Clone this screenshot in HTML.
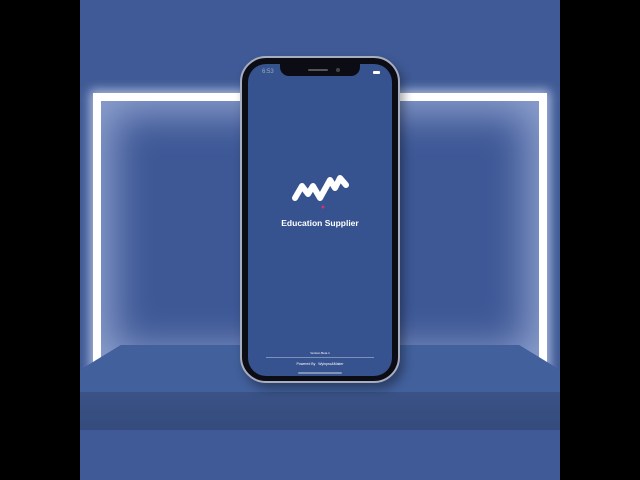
<!DOCTYPE html>
<html><head><style>
*{margin:0;padding:0;box-sizing:border-box}
body{width:640px;height:480px;background:#000;position:relative;overflow:hidden;font-family:"Liberation Sans",sans-serif}
.scene{position:absolute;left:80px;top:0;width:480px;height:480px;background:#3f5a96;overflow:hidden}
.frame{position:absolute;left:13px;top:93px;width:454px;height:280px;border:8px solid #fff;border-bottom:none;box-shadow:0 0 10px 3px rgba(220,230,255,.7)}
.inner{position:absolute;left:21px;top:101px;width:438px;height:260px;background:#3e5896;box-shadow:inset 0 0 40px 12px rgba(170,185,225,.75)}
.floor{position:absolute;left:0;top:345px;width:480px;height:47px;background:#42609c;clip-path:polygon(8.5% 0,91.5% 0,100% 53%,100% 100%,0 100%,0 53%)}
.front{position:absolute;left:0;top:392px;width:480px;height:38px;background:linear-gradient(#3a5286,#354b7d)}
.bottom{position:absolute;left:0;top:430px;width:480px;height:50px;background:#3f5a96}
.phone{position:absolute;left:240px;top:56px;width:160px;height:327px;border-radius:26px;background:#0c0d14;border:2px solid #a8adc0;box-shadow:4px 6px 10px rgba(0,0,0,.35)}
.screen{position:absolute;left:248px;top:64px;width:144px;height:312px;border-radius:18px;background:#36528f;overflow:hidden}
.notch{position:absolute;left:32px;top:0;width:80px;height:12px;background:#0c0d14;border-radius:0 0 9px 9px}
.t{position:absolute;color:#fff;text-align:center;width:144px;left:0}
</style></head><body>
<div class="scene">
<div class="inner"></div>
<div class="frame"></div>
<div class="floor"></div>
<div class="front"></div>
<div class="bottom"></div>
</div>
<div class="phone"></div>
<div class="screen">
<div class="notch"><div style="position:absolute;left:28px;top:5px;width:20px;height:2px;background:#555;border-radius:1px"></div><div style="position:absolute;left:56px;top:4px;width:4px;height:4px;background:#444;border-radius:2px"></div></div>
<div style="position:absolute;left:14px;top:5px;font-size:6px;color:#9ab">6:53</div>
<div style="position:absolute;right:12px;top:7px;width:7px;height:3px;background:#fff;border-radius:1px"></div>
<svg style="position:absolute;left:0;top:0" width="144" height="160"><polyline points="47,134 54,122 60,130 65,122 72,134 82,116 87,124 92,114 98,121" fill="none" stroke="#fff" stroke-width="6" stroke-linecap="round" stroke-linejoin="round"/><circle cx="75" cy="143" r="1.5" fill="#d0307a"/></svg>
<div class="t" style="top:154px;font-size:8.5px;font-weight:bold">Education Supplier</div>
<div class="t" style="top:287px;font-size:3px">Version Beta 1</div>
<div style="position:absolute;left:18px;top:293px;width:108px;height:1px;background:#7d90bb"></div>
<div class="t" style="top:298px;font-size:3.5px">Powered By &nbsp; Wyinpsc&amp;Maker</div>
<div style="position:absolute;left:50px;top:308px;width:44px;height:2px;background:#8293b8;border-radius:1px"></div>
</div>
</body></html>
